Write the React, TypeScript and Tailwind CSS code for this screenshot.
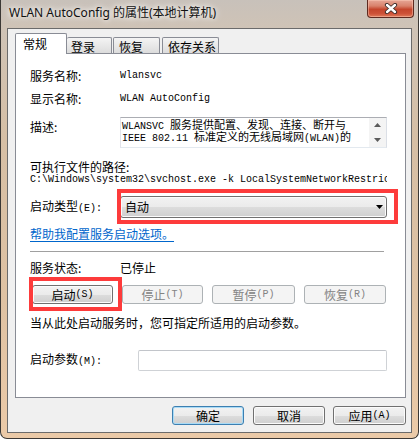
import React from "react";

const ASCII = /^[\x20-\x7e]+$/;

function Mixed({ text, monoCls = "text-[10px]" }: { text: string; monoCls?: string }) {
  const parts = text.match(/[\x20-\x7e]+|[^\x20-\x7e]+/g) || [];
  return (
    <>
      {parts.map((p, i) =>
        ASCII.test(p) ? (
          <span key={i} className={"font-['Liberation_Mono',monospace] whitespace-pre " + monoCls}>
            {p}
          </span>
        ) : (
          <span key={i}>{p}</span>
        )
      )}
    </>
  );
}

function Btn({ label, w, disabled, def }: { label: string; w: string; disabled?: boolean; def?: boolean }) {
  const base = "h-[19px] rounded-[3px] border flex items-center justify-center leading-[16px] " + w + " ";
  if (disabled)
    return (
      <div className={base + "border-[#adb2b5] bg-[#f4f4f4] text-[#838383]"}>
        <Mixed text={label} />
      </div>
    );
  if (def)
    return (
      <div
        className={
          base +
          "border-[#3c7fb1] bg-[linear-gradient(180deg,#f2f2f2_0%,#ebebeb_50%,#dddddd_50%,#cfcfcf_100%)] shadow-[inset_0_0_0_1px_#a9dbf6] text-black"
        }
      >
        <Mixed text={label} />
      </div>
    );
  return (
    <div
      className={
        base +
        "border-[#707070] bg-[linear-gradient(180deg,#f2f2f2_0%,#ebebeb_50%,#dddddd_50%,#cfcfcf_100%)] shadow-[inset_0_0_0_1px_#fbfbfb] text-black"
      }
    >
      <Mixed text={label} />
    </div>
  );
}

export default function App() {
  return (
    <div className="relative w-[419px] h-[439px] overflow-hidden border-x border-b border-[#3b3835] rounded-b-[7px] bg-[linear-gradient(180deg,#c8c1ba_0px,#cfc3b6_28px,#d6bfa5_140px,#dfc2a3_300px,#ebcaa8_439px)] flex flex-col font-['Noto_Sans_CJK_SC',sans-serif] text-[12px] text-black">
      {/* title bar */}
      <div className="h-[28px] shrink-0 flex items-start pl-[8px] pt-[5px]">
        <span className="font-['Noto_Sans','Noto_Sans_CJK_SC',sans-serif] text-[12px] leading-[16px] text-[#111] [text-shadow:0_0_5px_#ffffff,0_0_9px_#ffffff]">
          WLAN AutoConfig 的属性(本地计算机)
        </span>
      </div>

      {/* close button */}
      <div className="absolute left-[366px] top-0 w-[47px] h-[18px] rounded-b-[4px] border border-t-0 border-[#5e2a20] bg-[linear-gradient(180deg,#e6a696_0%,#d9826c_35%,#c4452c_55%,#cd5238_80%,#e07a5a_100%)] shadow-[inset_0_0_0_1px_rgba(255,210,190,0.45)] flex items-center justify-center">
        <svg width="14" height="11" viewBox="0 0 14 11">
          <path d="M3 2 L11 9 M11 2 L3 9" stroke="#3a2b28" strokeWidth="4.2" strokeLinecap="round" fill="none" />
          <path d="M3 2 L11 9 M11 2 L3 9" stroke="#ffffff" strokeWidth="2.4" strokeLinecap="round" fill="none" />
        </svg>
      </div>

      {/* client area */}
      <div className="mx-[6px] h-[405px] shrink-0 border border-[#6b6b6b] bg-[#f0f0f0] pl-[7px] pr-[5px] pt-[4px] flex flex-col">
        {/* tabs */}
        <div className="h-[20px] flex items-end">
          <div className="relative z-10 -mb-[1px] h-[21px] w-[52px] border border-b-0 border-[#898c95] bg-white rounded-t-[2px] pl-[7px] pt-[2px] leading-[16px]">
            常规
          </div>
          <div className="h-[16px] w-[45px] border border-b-0 border-l-0 border-[#898c95] bg-[linear-gradient(180deg,#f4f4f4,#dcdcdc)] rounded-t-[2px] pl-[4px] pt-[1px] leading-[15px]">
            登录
          </div>
          <div className="ml-[1px] h-[16px] w-[47px] border border-b-0 border-[#898c95] bg-[linear-gradient(180deg,#f4f4f4,#dcdcdc)] rounded-t-[2px] pl-[5px] pt-[1px] leading-[15px]">
            恢复
          </div>
          <div className="ml-[2px] h-[16px] w-[57px] border border-b-0 border-[#898c95] bg-[linear-gradient(180deg,#f4f4f4,#dcdcdc)] rounded-t-[2px] pl-[5px] pt-[1px] leading-[15px]">
            依存关系
          </div>
        </div>

        {/* panel */}
        <div className="h-[345px] w-[391px] border border-[#898c95] bg-white pl-[14px] flex flex-col">
          <div className="mt-[14px] h-[16px] flex items-center leading-[16px]">
            <div className="w-[90px]">服务名称:</div>
            <span className="font-['Liberation_Mono',monospace] text-[10px]">Wlansvc</span>
          </div>
          <div className="mt-[7px] h-[16px] flex items-center leading-[16px]">
            <div className="w-[90px]">显示名称:</div>
            <span className="font-['Liberation_Mono',monospace] text-[10px] whitespace-pre">WLAN AutoConfig</span>
          </div>
          <div className="mt-[10px] flex items-start">
            <div className="w-[90px] pt-[2px] leading-[16px]">描述:</div>
            <div className="w-[267px] h-[31px] border border-[#abadb3] border-r-[#dbdfe6] border-b-[#e3e9ef] border-l-[#e2e3ea] bg-white flex">
              <div className="flex-1 pl-[1px] text-[11px] leading-[12px] overflow-hidden whitespace-nowrap">
                <div className="h-[12px]">
                  <Mixed text="WLANSVC 服务提供配置、发现、连接、断开与" />
                </div>
                <div className="h-[12px]">
                  <Mixed text="IEEE 802.11 标准定义的无线局域网(WLAN)的" />
                </div>
              </div>
              <div className="w-[17px] h-full bg-[#f4f4f4] flex flex-col items-center justify-between py-[5px]">
                <svg width="7" height="4" viewBox="0 0 7 4">
                  <polygon points="3.5,0 7,4 0,4" fill="#5b5b5b" />
                </svg>
                <svg width="7" height="4" viewBox="0 0 7 4">
                  <polygon points="0,0 7,0 3.5,4" fill="#5b5b5b" />
                </svg>
              </div>
            </div>
          </div>
          <div className="mt-[12px] h-[14px] leading-[14px]">可执行文件的路径:</div>
          <div className="h-[12px] w-[357px] overflow-hidden whitespace-nowrap leading-[12px] font-['Liberation_Mono',monospace] text-[10px]">
            {"C:\\Windows\\system32\\svchost.exe -k LocalSystemNetworkRestricted"}
          </div>
          <div className="mt-[10px] flex items-center">
            <div className="w-[90px] leading-[16px]">
              <Mixed text="启动类型(E):" />
            </div>
            <div className="w-[267px] h-[22px] rounded-[3px] border border-[#707070] bg-[linear-gradient(180deg,#f2f2f2_0%,#ebebeb_50%,#dddddd_50%,#cfcfcf_100%)] shadow-[inset_0_0_0_1px_#fbfbfb] flex items-center justify-between pl-[4px] pr-[3px]">
              <span className="leading-[16px]">自动</span>
              <svg width="7" height="4" viewBox="0 0 7 4">
                <polygon points="0,0 7,0 3.5,4" fill="#000" />
              </svg>
            </div>
          </div>
          <div className="mt-[8px] h-[16px] leading-[16px]">
            <span className="text-[#0066cc] underline underline-offset-2">帮助我配置服务启动选项。</span>
          </div>
          <div className="mt-[9px] w-[354px] h-[2px] border-t border-[#a0a0a0] border-b border-b-white" />
          <div className="mt-[7px] h-[16px] flex items-center leading-[16px]">
            <div className="w-[90px]">服务状态:</div>
            <span>已停止</span>
          </div>
          <div className="mt-[9px] ml-[2px] flex gap-[9px]">
            <Btn label="启动(S)" w="w-[81px]" />
            <Btn label="停止(T)" w="w-[81px]" disabled />
            <Btn label="暂停(P)" w="w-[83px]" disabled />
            <Btn label="恢复(R)" w="w-[82px]" disabled />
          </div>
          <div className="mt-[11px] h-[16px] leading-[16px]">当从此处启动服务时，您可指定所适用的启动参数。</div>
          <div className="mt-[19px] flex items-center">
            <div className="w-[108px] leading-[16px]">
              <Mixed text="启动参数(M):" />
            </div>
            <div className="w-[249px] h-[21px] rounded-[2px] border border-[#cfd2d6] border-t-[#c2c5ca] bg-white" />
          </div>
        </div>

        {/* bottom buttons */}
        <div className="mt-[8px] flex justify-end">
          <Btn label="确定" w="w-[72px]" def />
          <div className="w-[9px]" />
          <Btn label="取消" w="w-[72px]" />
          <div className="w-[8px]" />
          <Btn label="应用(A)" w="w-[73px]" />
        </div>
      </div>

      {/* red annotation boxes */}
      <div className="absolute left-[116px] top-[189px] w-[281px] h-[35px] border-4 border-[#fd3b3b] pointer-events-none" />
      <div className="absolute left-[28px] top-[277px] w-[93px] h-[34px] border-4 border-[#fd3b3b] pointer-events-none" />
    </div>
  );
}
